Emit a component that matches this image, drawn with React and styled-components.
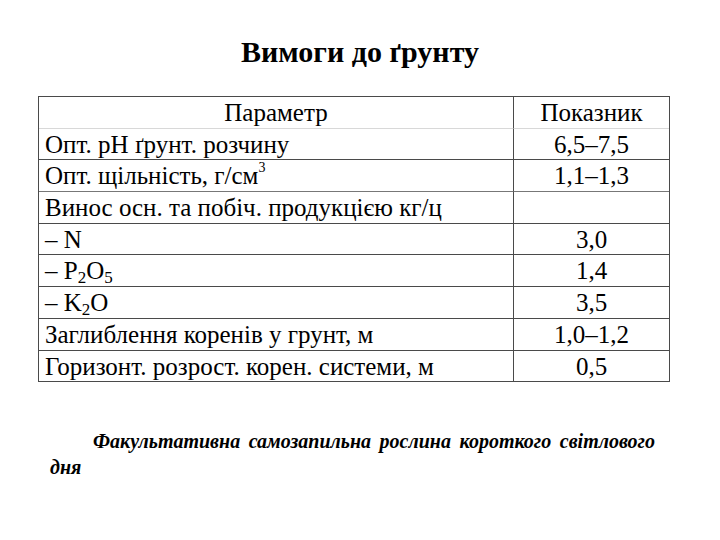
import React from "react";
import styled, { createGlobalStyle } from "styled-components";

const Global = createGlobalStyle`
  html, body { margin: 0; padding: 0; background: #ffffff; }
  body { color: #000; font-family: Tinos, "Liberation Serif", serif; }
`;

const Page = styled.main`
  width: 720px;
  height: 540px;
  box-sizing: border-box;
  padding: 37px 0 0 38px;
  display: flex;
  flex-direction: column;
  align-items: flex-start;
  font-family: Tinos, "Liberation Serif", serif;
`;

const Title = styled.h1`
  align-self: stretch;
  margin: 0 38px 30px 0;
  font-family: Tinos, "Liberation Serif", serif;
  font-size: 30px;
  line-height: 29px;
  font-weight: 700;
  text-align: center;
`;

const Table = styled.section`
  display: grid;
  grid-template-columns: 475px 155px;
  border: 1px solid #4a4a4a;
  border-bottom: none;
  font-family: Tinos, "Liberation Serif", serif;
  font-size: 25px;
`;

const Cell = styled.div`
  box-sizing: border-box;
  height: 31.7px;
  padding: 2px ${(p) => (p.$center ? "0" : "6px")} 0;
  line-height: 28.7px;
  white-space: nowrap;
  text-align: ${(p) => (p.$center ? "center" : "left")};
  border-bottom: 1px solid ${(p) => p.$line || "#4a4a4a"};
  border-right: ${(p) => (p.$first ? "1px solid #4a4a4a" : "none")};
`;

const Sup = styled.sup`
  font-size: 14px;
  line-height: 0;
  vertical-align: 12px;
`;

const Sub = styled.sub`
  font-size: 17px;
  line-height: 0;
  vertical-align: -4px;
`;

const Note = styled.p`
  margin: 46px 0 0 12px;
  width: 605px;
  font-family: Tinos, "Liberation Serif", serif;
  font-size: 20px;
  line-height: 26px;
  font-weight: 700;
  font-style: italic;
  text-align: justify;
  text-indent: 43px;
`;

const rows = [
  { p: "Параметр", v: "Показник", head: true, line: "#d8d8d8" },
  { p: "Опт. pH ґрунт. розчину", v: "6,5–7,5" },
  { p: <>Опт. щільність, г/см<Sup>3</Sup></>, v: "1,1–1,3", line: "#777" },
  { p: "Винос осн. та побіч. продукцією кг/ц", v: "" },
  { p: "– N", v: "3,0" },
  { p: <>– P<Sub>2</Sub>O<Sub>5</Sub></>, v: "1,4" },
  { p: <>– K<Sub>2</Sub>O</>, v: "3,5" },
  { p: "Заглиблення коренів у грунт, м", v: "1,0–1,2" },
  { p: "Горизонт. розрост. корен. системи, м", v: "0,5" },
];

export default function App() {
  return (
    <>
      <Global />
      <Page>
        <Title>Вимоги до ґрунту</Title>
        <Table>
          {rows.map((r, i) => (
            <React.Fragment key={i}>
              <Cell $first $center={r.head} $line={r.line}>{r.p}</Cell>
              <Cell $center $line={r.line}>{r.v}</Cell>
            </React.Fragment>
          ))}
        </Table>
        <Note>
          Факультативна самозапильна рослина короткого світлового дня
        </Note>
      </Page>
    </>
  );
}
